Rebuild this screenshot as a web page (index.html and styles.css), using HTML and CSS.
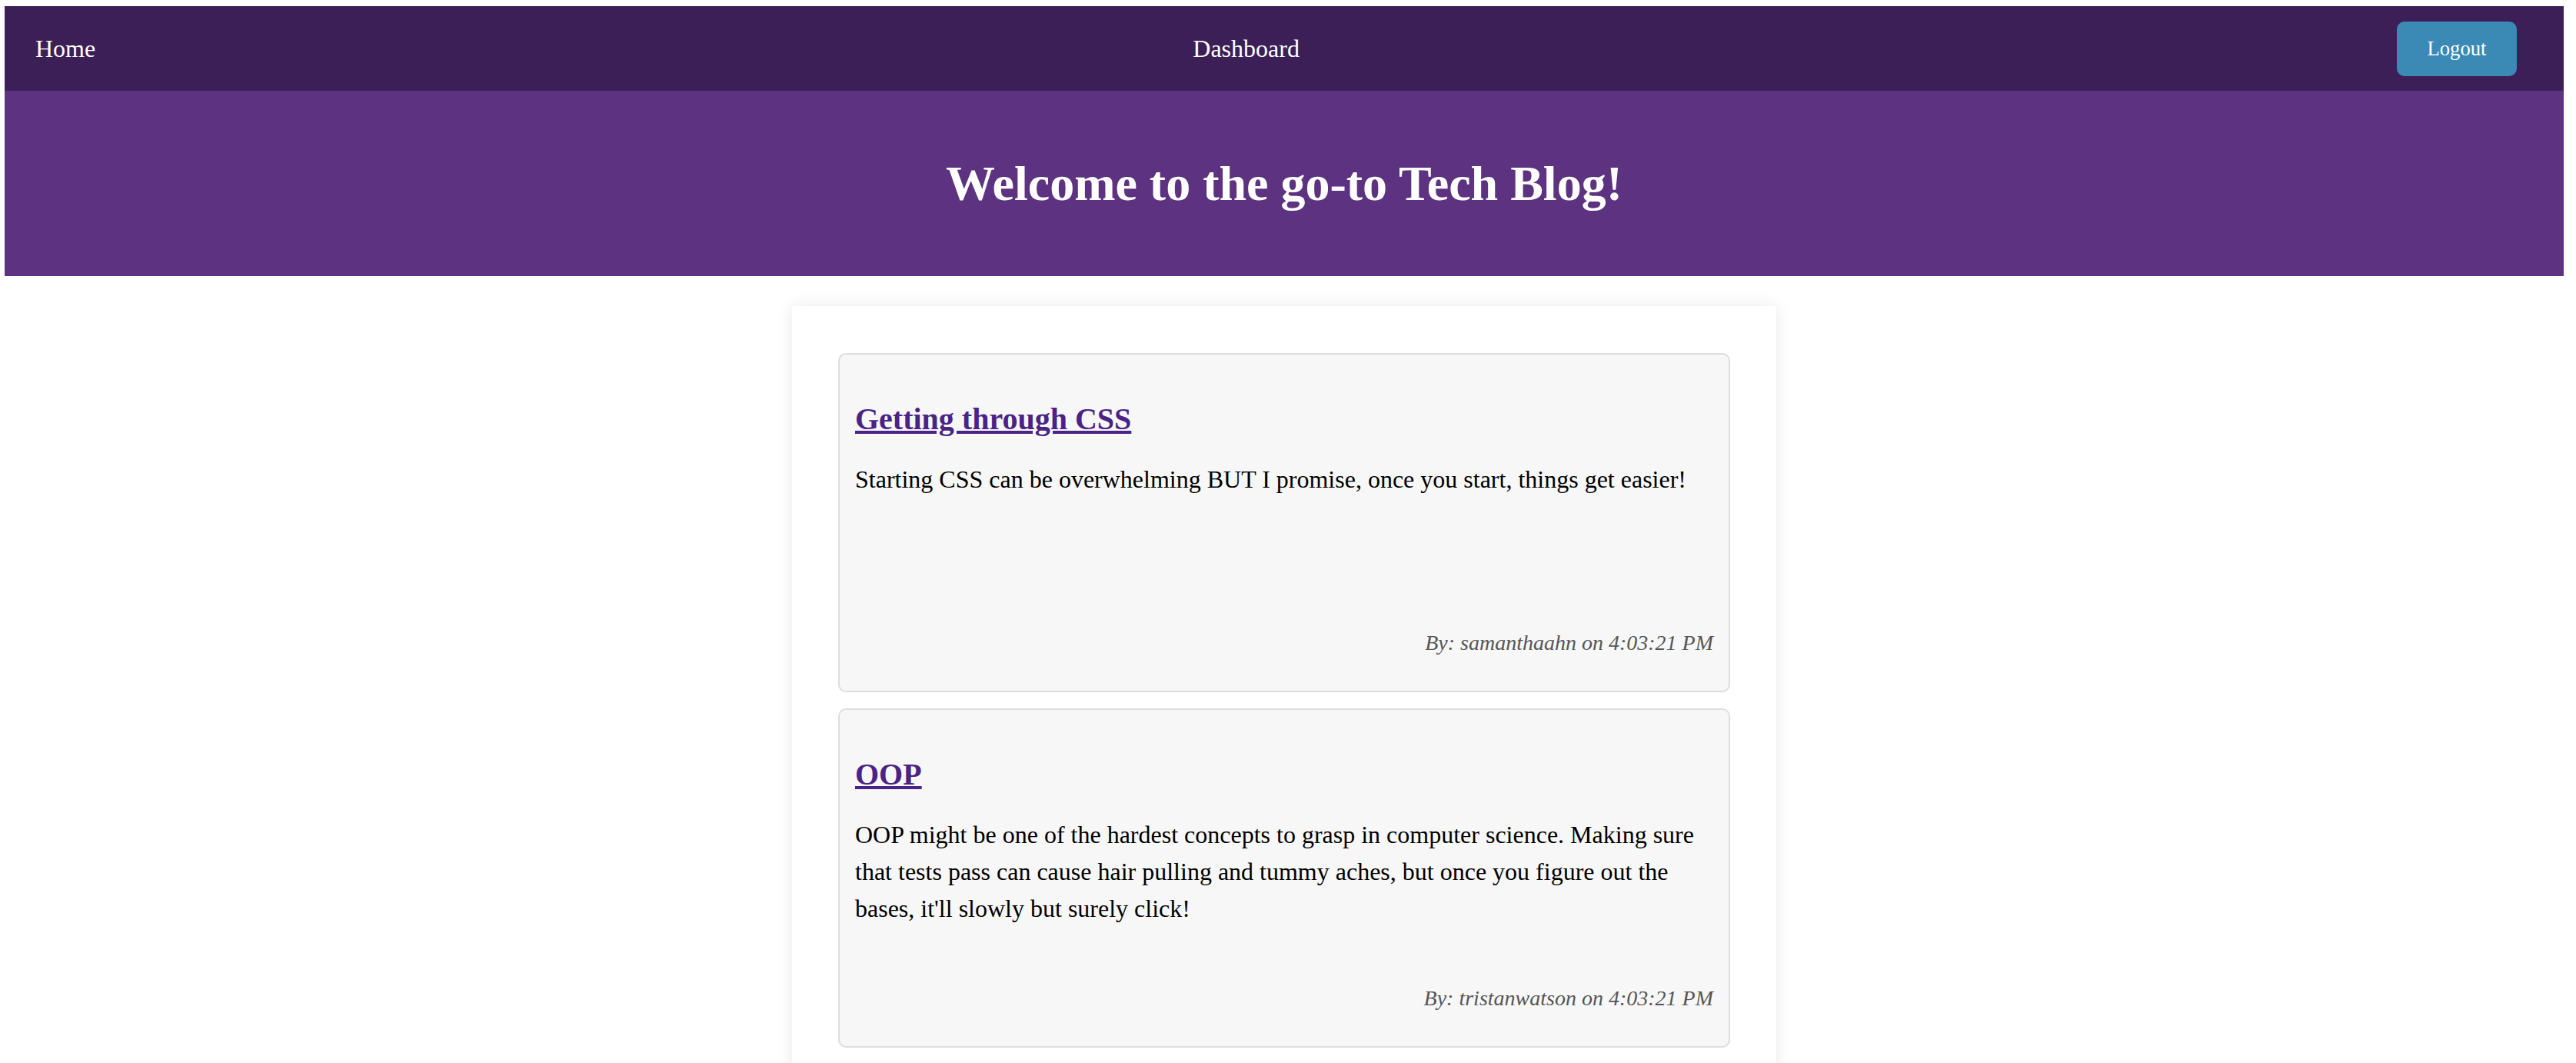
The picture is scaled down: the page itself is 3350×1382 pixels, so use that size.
FILE: index.html
```html
<!DOCTYPE html>
<html lang="en">
<head>
<meta charset="utf-8">
<title>Tech Blog</title>
<link rel="stylesheet" href="styles.css">
</head>
<body>
<nav class="topnav">
  <a class="nav-link" href="#">Home</a>
  <a class="nav-link" href="#">Dashboard</a>
  <button class="logout-btn" type="button">Logout</button>
</nav>
<header class="hero">
  <h1 class="hero-title">Welcome to the go-to Tech Blog!</h1>
</header>
<main class="posts">
  <article class="post-card">
    <h2 class="post-title"><a href="#">Getting through CSS</a></h2>
    <p class="post-body">Starting CSS can be overwhelming BUT I promise, once you start, things get easier!</p>
    <p class="post-meta">By: samanthaahn on 4:03:21 PM</p>
  </article>
  <article class="post-card">
    <h2 class="post-title"><a href="#">OOP</a></h2>
    <p class="post-body">OOP might be one of the hardest concepts to grasp in computer science. Making sure that tests pass can cause hair pulling and tummy aches, but once you figure out the bases, it'll slowly but surely click!</p>
    <p class="post-meta">By: tristanwatson on 4:03:21 PM</p>
  </article>
</main>
</body>
</html>
```
FILE: styles.css
```css
html {
  overflow: hidden;
}

body {
  margin: 8px 16px 0 6px;
  font-family: "Liberation Serif", "Times New Roman", serif;
  background: #ffffff;
  color: #000;
}

.topnav {
  height: 110px;
  background: #3d1f58;
  display: flex;
  justify-content: space-between;
  align-items: center;
  padding: 0 61px 0 40px;
  box-sizing: border-box;
}

.nav-link {
  color: #ffffff;
  text-decoration: none;
  font-size: 32px;
}

.logout-btn {
  width: 156px;
  height: 71px;
  background: #3b8ab5;
  color: #ffffff;
  border: none;
  border-radius: 10px;
  font-family: "Liberation Serif", "Times New Roman", serif;
  font-size: 26.67px;
  padding: 0;
}

.hero {
  background: #5d3280;
  padding: 85px 0;
  text-align: center;
}

.hero-title {
  margin: 0;
  color: #ffffff;
  font-size: 64px;
  font-weight: bold;
  line-height: 71px;
}

.posts {
  width: 1280px;
  box-sizing: border-box;
  margin: 39px auto 0;
  padding: 61px 60px 60px;
  background: #ffffff;
  box-shadow: 0 0 20px rgba(0, 0, 0, 0.09);
  display: flex;
  flex-direction: column;
  gap: 21px;
}

.post-card {
  height: 441px;
  box-sizing: border-box;
  background: #f7f7f7;
  border: 2px solid #dddddd;
  border-radius: 10px;
  padding: 0 20px 20px;
  display: flex;
  flex-direction: column;
}

.post-title {
  margin: 61px 0 0;
  font-size: 40px;
  font-weight: bold;
  line-height: 46px;
}

.post-title a {
  color: #4b2386;
  text-decoration: underline;
}

.post-body {
  margin: 31px 0 0;
  font-size: 32px;
  line-height: 48px;
}

.post-meta {
  margin: auto 0 26px;
  text-align: right;
  font-style: italic;
  font-size: 28px;
  color: #555555;
  line-height: 32px;
}
```
